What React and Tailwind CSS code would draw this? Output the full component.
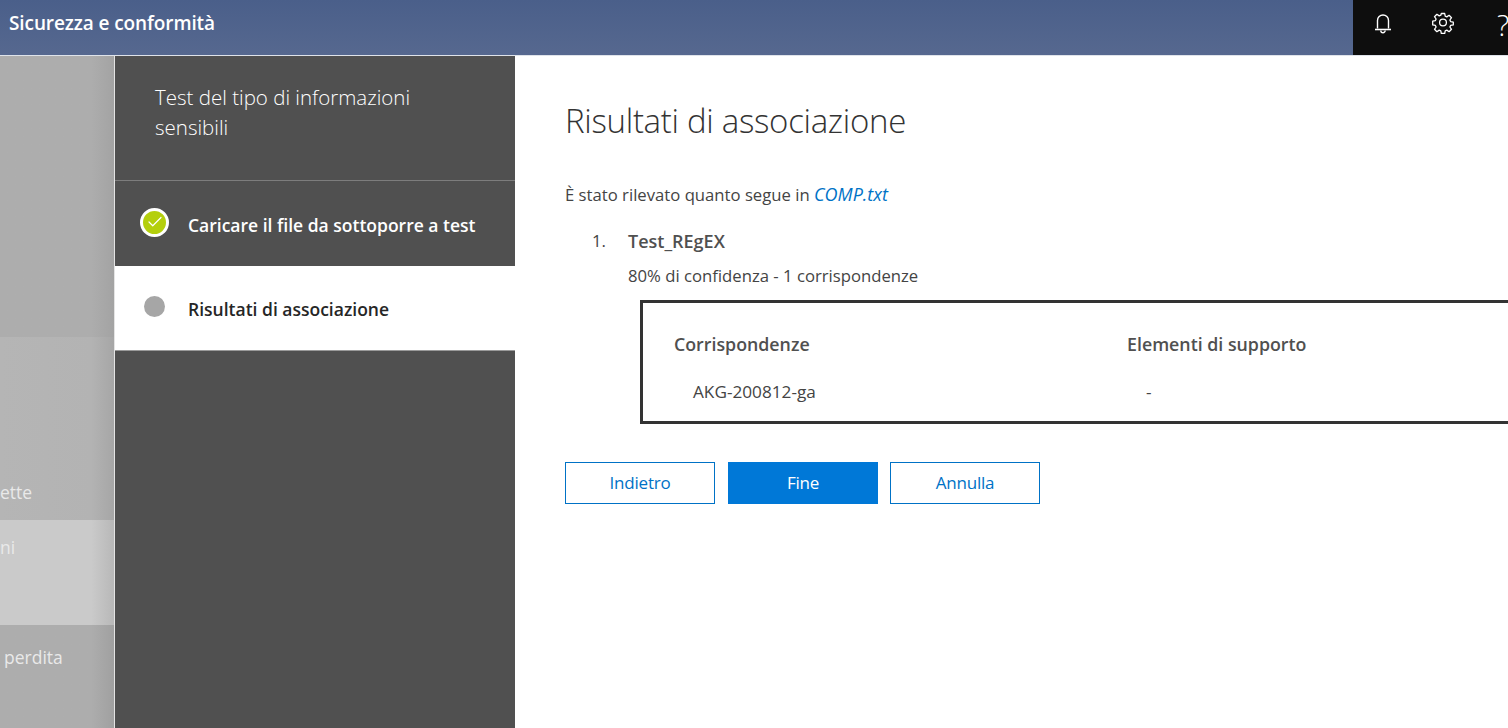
import React from 'react';
import { Check } from 'lucide-react';

const font = "font-['Open_Sans','Noto_Sans',sans-serif]";

const BellIcon = () => (
  <svg width="18" height="22" viewBox="0 0 18 22" fill="none" stroke="#fff" strokeWidth="1.4">
    <path d="M3.5 16.5V8.5a5.5 5.5 0 0 1 11 0v8" />
    <path d="M1 17.5h16" strokeWidth="1.6" />
    <path d="M6.8 18.5a2.2 2.2 0 0 0 4.4 0" />
  </svg>
);

const GearIcon = () => (
  <svg width="22" height="22" viewBox="0 0 22 22" fill="none" stroke="#fff" strokeWidth="1.3" strokeLinejoin="round">
    <path d="M9.3 1.5h3.4l.5 2.7 1.6.7 2.3-1.6 2.4 2.4-1.6 2.3.7 1.6 2.7.5v2.8l-2.7.5-.7 1.6 1.6 2.3-2.4 2.4-2.3-1.6-1.6.7-.5 2.7H9.3l-.5-2.7-1.6-.7-2.3 1.6-2.4-2.4 1.6-2.3-.7-1.6-2.7-.5V9.1l2.7-.5.7-1.6-1.6-2.3 2.4-2.4 2.3 1.6 1.6-.7z" />
    <circle cx="11" cy="10.5" r="3.4" />
  </svg>
);

const Step = ({ active, done, label }) => (
  <div className={`h-[85px] flex items-center pl-[24px] ${active ? 'bg-white border-b border-[#9a9a9a]' : ''}`}>
    <div className="w-[31px] flex justify-center -mt-[3px]">
      {done ? (
        <div className="w-[29px] h-[29px] rounded-full bg-[#b4cf0d] border-[3px] border-white flex items-center justify-center">
          <Check size={18} strokeWidth={1.6} className="text-white" />
        </div>
      ) : (
        <div className="w-[21px] h-[21px] rounded-full bg-[#a6a6a6]" />
      )}
    </div>
    <span className={`ml-[18px] pt-[3px] text-[17.5px] font-semibold ${active ? 'text-[#262626]' : 'text-white'}`}>{label}</span>
  </div>
);

const App = () => {
  return (
    <div className={`w-[1508px] h-[728px] overflow-hidden flex flex-col bg-white ${font}`}>
      <header className="h-[56px] shrink-0 flex border-b border-[#dfe3ea] bg-gradient-to-b from-[#4a5f8a] to-[#56688f]">
        <div className="flex-1 pl-[9px] pt-[9px] text-[19px] font-semibold text-white tracking-[-0.1px]">Sicurezza e conformità</div>
        <div className="w-[155px] overflow-hidden bg-[#0e0e0e] flex items-start pt-[12px] text-white">
          <div className="ml-[21px] w-[18px] shrink-0"><BellIcon /></div>
          <div className="ml-[40px] w-[22px] shrink-0"><GearIcon /></div>
          <div className="ml-[43px] shrink-0 text-[29px] leading-[26px] font-light">?</div>
        </div>
      </header>

      <div className="flex-1 flex min-h-0">
        <aside className="w-[115px] shrink-0 flex flex-col border-r border-[#e4e4e4] text-[17.5px] text-[#e9e9e9]">
          <div className="h-[281px] bg-gradient-to-r from-[#adadad] via-[#adadad] via-80% to-[#a3a3a3]" />
          <div className="h-[183px] flex flex-col justify-end pb-[15px] bg-gradient-to-r from-[#b5b5b5] via-[#b3b3b3] via-80% to-[#a6a6a6]">ette</div>
          <div className="h-[105px] pt-[14px] bg-gradient-to-r from-[#cacaca] via-[#cacaca] via-80% to-[#b8b8b8]">ni</div>
          <div className="flex-1 pt-[19px] pl-[4px] bg-gradient-to-r from-[#adadad] via-[#adadad] via-80% to-[#a0a0a0]">perdita</div>
        </aside>

        <nav className="w-[400px] shrink-0 bg-[#505050] flex flex-col">
          <div className="h-[125px] pl-[40px] pt-[26px] pr-[60px] text-[20.5px] leading-[30px] font-light text-white border-b border-[#7d7d7d]">
            Test del tipo di informazioni sensibili
          </div>
          <Step done label="Caricare il file da sottoporre a test" />
          <Step active label="Risultati di associazione" />
        </nav>

        <main className="flex-1 min-w-0 overflow-hidden pl-[50px] text-[#444444]">
          <h1 className="mt-[41px] text-[33px] leading-[48px] font-light text-[#333333] tracking-[-0.3px]">Risultati di associazione</h1>
          <p className="mt-[38px] text-[16.7px] leading-[24px]">
            È stato rilevato quanto segue in <em className="text-[18px] leading-none text-[#0072c6]">COMP.txt</em>
          </p>
          <div className="mt-[22px] flex pl-[27px] text-[16.7px]">
            <span className="w-[36px] shrink-0 leading-[24px]">1.</span>
            <div>
              <div className="font-semibold text-[18px] leading-[24px] text-[#505050]">Test_REgEX</div>
              <div className="mt-[11px] leading-[24px]">80% di confidenza - 1 corrispondenze</div>
              <div className="mt-[12px] ml-[12px] w-[960px] h-[124px] border-[3px] border-[#333333] pl-[31px] pt-[28px]">
                <div className="flex font-semibold text-[17.8px] leading-[26px] text-[#505050]">
                  <span className="w-[453px]">Corrispondenze</span>
                  <span>Elementi di supporto</span>
                </div>
                <div className="flex mt-[23px] text-[17.2px] leading-[24px]">
                  <span className="w-[452px] pl-[19px]">AKG-200812-ga</span>
                  <span className="pl-[20px]">-</span>
                </div>
              </div>
            </div>
          </div>
          <div className="mt-[38px] flex text-[17px] tracking-[-0.2px]">
            <button className="w-[150px] h-[42px] border border-[#0072c6] text-[#0072c6]">Indietro</button>
            <button className="ml-[13px] w-[150px] h-[42px] bg-[#0078d7] text-white">Fine</button>
            <button className="ml-[12px] w-[150px] h-[42px] border border-[#0072c6] text-[#0072c6]">Annulla</button>
          </div>
        </main>
      </div>
    </div>
  );
};

export default App;
